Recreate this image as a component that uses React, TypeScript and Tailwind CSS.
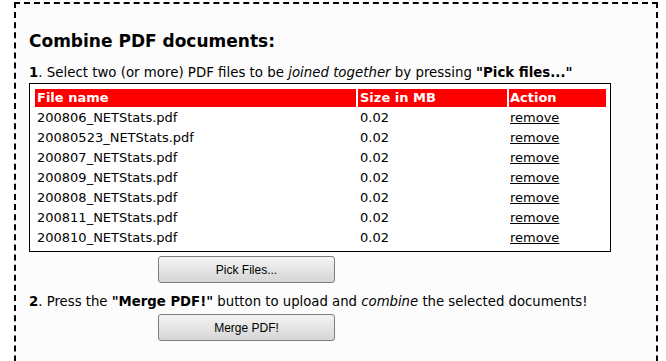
import React from 'react';

const files = [
  '200806_NETStats.pdf',
  '20080523_NETStats.pdf',
  '200807_NETStats.pdf',
  '200809_NETStats.pdf',
  '200808_NETStats.pdf',
  '200811_NETStats.pdf',
  '200810_NETStats.pdf',
];

const Button = ({ label }: { label: string }) => (
  <button
    type="button"
    className="ml-[129px] flex h-[27px] w-[177px] items-center justify-center rounded-[3px] border border-[#7d7d7d] bg-gradient-to-b from-[#f5f5f5] to-[#d5d5d5] text-[12px] text-black [font-family:'Liberation_Sans',Arial,sans-serif]"
  >
    {label}
  </button>
);

export default function App() {
  return (
    <div className="h-[361px] overflow-hidden bg-white pl-[14px] pt-[2px] text-black [font-family:'DejaVu_Sans',Verdana,sans-serif]">
      <div className="h-[400px] w-[644px] border-2 border-dashed border-black bg-[#fcfcfc] px-[13px] pt-[27px]">
        <h2 className="text-[17px] font-bold leading-[20px]">Combine PDF documents:</h2>

        <p className="mt-[14px] text-[13.35px] leading-[16px]">
          <b>1</b>. Select two (or more) PDF files to be <i>joined together</i> by pressing{' '}
          <b>"Pick files..."</b>
        </p>

        <div className="mt-[2px] w-[582px] border border-black bg-white pb-[4px] pl-[5px] pr-[4px] pt-[5px]">
          <div className="grid grid-cols-[321px_149px_97px] gap-[2px] text-[13px] leading-[18px]">
            <div className="bg-[#ff0000] pl-[2px] font-bold text-white">File name</div>
            <div className="bg-[#ff0000] pl-[2px] font-bold text-white">Size in MB</div>
            <div className="bg-[#ff0000] pl-[1px] font-bold text-white">Action</div>
            {files.map((f) => (
              <React.Fragment key={f}>
                <div className="pl-[2px]">{f}</div>
                <div className="pl-[2px]">0.02</div>
                <div className="pl-[1px]">
                  <a href="#" className="underline">remove</a>
                </div>
              </React.Fragment>
            ))}
          </div>
        </div>

        <div className="mt-[4px]">
          <Button label="Pick Files..." />
        </div>

        <p className="mt-[11px] text-[13.25px] leading-[16px]">
          <b>2</b>. Press the <b>"Merge PDF!"</b> button to upload and <i>combine</i> the selected
          documents!
        </p>

        <div className="mt-[4px]">
          <Button label="Merge PDF!" />
        </div>
      </div>
    </div>
  );
}
